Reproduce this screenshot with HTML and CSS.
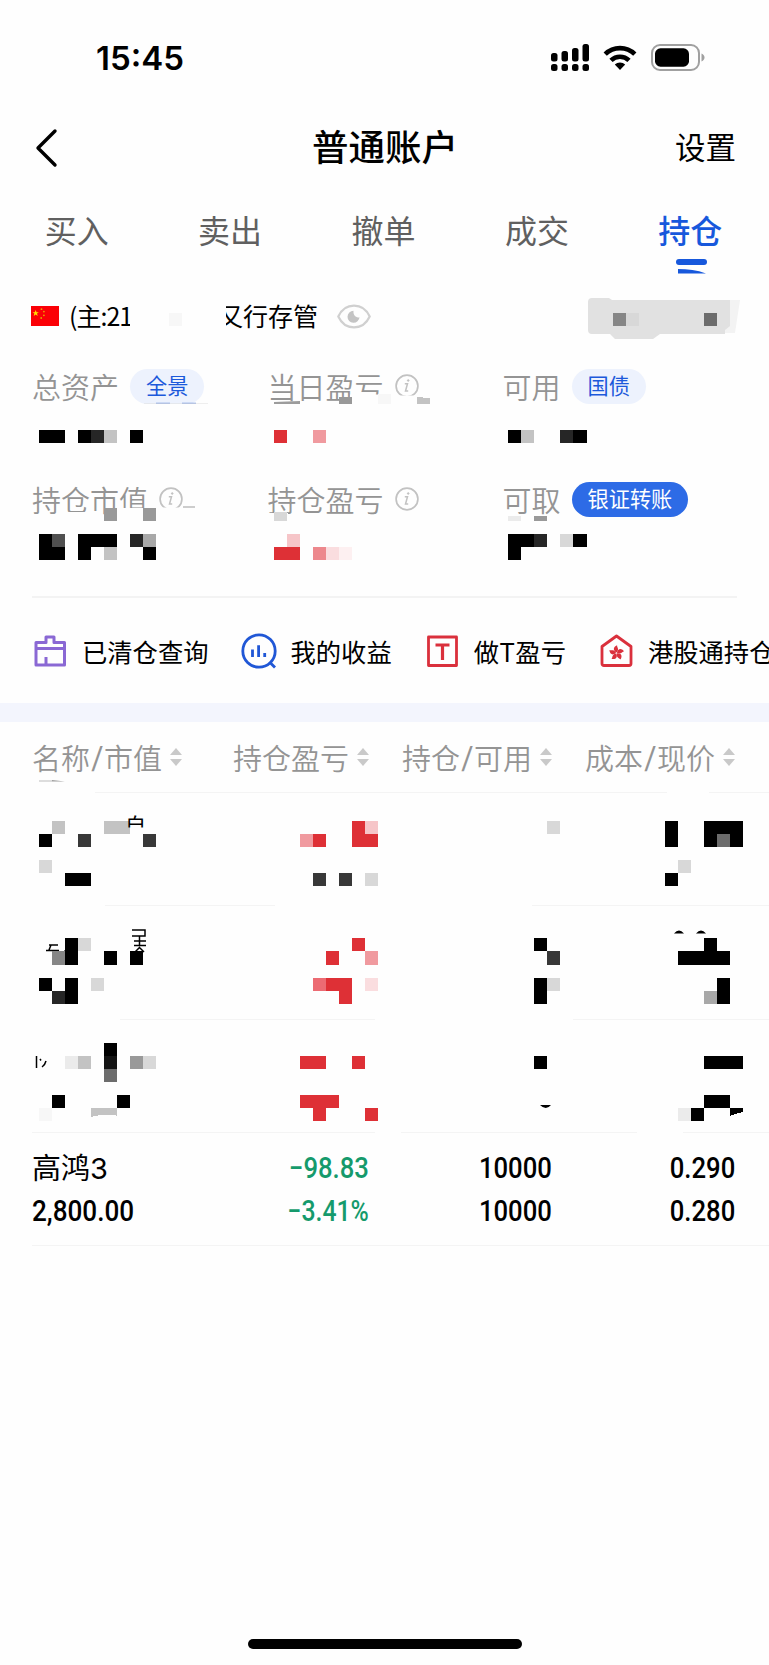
FILE: index.html
```
<!DOCTYPE html>
<html lang="zh-CN">
<head>
  <meta charset="UTF-8">
  <meta name="viewport" content="width=device-width, initial-scale=1.0">
  <title>普通账户</title>
  <link rel="stylesheet" href="styles.css">
</head>
<body>
  <div class="app">
    <!-- Status bar -->
    <div class="status-bar">
      <span class="time">15:45</span>
      <div class="status-icons">
        <svg class="signal" width="38" height="27" viewBox="0 0 38 27">
          <rect x="0" y="9" width="6.5" height="8.5" rx="2.5"/>
          <rect x="10.5" y="7" width="6.5" height="10.5" rx="2.5"/>
          <rect x="21" y="4" width="6.5" height="13.5" rx="2.5"/>
          <rect x="31.5" y="0" width="6.5" height="17.5" rx="2.5"/>
          <rect x="0" y="20" width="6.5" height="7" rx="2.5"/>
          <rect x="10.5" y="20" width="6.5" height="7" rx="2.5"/>
          <rect x="21" y="20" width="6.5" height="7" rx="2.5"/>
          <rect x="31.5" y="20" width="6.5" height="7" rx="2.5"/>
        </svg>
        <svg class="wifi" width="34" height="25" viewBox="0 0 34 25">
          <path d="M2.2 9.2a21 21 0 0 1 29.6 0M8 15.4a12.8 12.8 0 0 1 18 0" fill="none" stroke="#000" stroke-width="4.6"/>
          <path d="M17 25l-5.2-5.4a7.4 7.4 0 0 1 10.4 0z"/>
        </svg>
        <svg class="battery" width="54" height="27" viewBox="0 0 54 27">
          <rect x="1" y="1" width="47" height="25" rx="8" fill="none" stroke="#a0a0a0" stroke-width="2"/>
          <rect x="4" y="4.3" width="34" height="18.4" rx="5.5"/>
          <path d="M50.5 9.5c4 1.5 4 6.5 0 8z" fill="#a0a0a0"/>
        </svg>
      </div>
    </div>

    <!-- Navigation -->
    <div class="navbar">
      <svg class="back" width="24" height="40" viewBox="0 0 24 40"><path d="M21 3L4 20l17 17" fill="none" stroke="#000" stroke-width="3.4" stroke-linecap="round" stroke-linejoin="round"/></svg>
      <h1>普通账户</h1>
      <a class="settings">设置</a>
    </div>

    <div class="tabs">
      <span class="tab">买入</span>
      <span class="tab">卖出</span>
      <span class="tab">撤单</span>
      <span class="tab">成交</span>
      <span class="tab active">持仓
        <svg class="tab-mark" width="32" height="16" viewBox="0 0 32 16"><rect x="0" y="0" width="31" height="6" rx="3"/><path d="M2 10c10 0 19 1 28 4.5H2z"/></svg>
      </span>
    </div>

    <!-- Account -->
    <div class="account">
      <svg class="flag" width="28" height="20" viewBox="0 0 28 20">
        <rect width="28" height="20" fill="#fb0006"/>
        <path d="M4.7 4l.8 2.2h2.3L6 7.6l.7 2.3-2-1.4-2 1.4.7-2.3-1.9-1.4h2.3z" fill="#ffe100"/>
        <circle cx="10.5" cy="3.2" r=".9" fill="#e8a300"/><circle cx="12.9" cy="5.6" r=".9" fill="#e8a300"/><circle cx="12.9" cy="9.3" r=".9" fill="#e8a300"/><circle cx="10.2" cy="12" r=".9" fill="#e8a300"/>
      </svg>
      <span class="account-id">(主:21</span>
      <span class="bank"><span class="bank-cut">又</span>行存管</span>
      <svg class="eye" width="34" height="25" viewBox="0 0 34 25">
        <path d="M1.3 12.5C8-2 26-2 32.7 12.5 26 27 8 27 1.3 12.5z" fill="none" stroke="#d0d0d0" stroke-width="2.2"/>
        <path d="M16.5 6.8a6 6 0 1 0 6 6.4c-3.5 1-6.5-2-6-6.4z" fill="#c4c4c4"/>
      </svg>
    </div>

    <!-- Summary -->
    <div class="summary">
      <div class="item">总资产<span class="pill">全景</span></div>
      <div class="item">当日盈亏<svg class="info" width="24" height="24" viewBox="0 0 24 24"><use href="#info"/></svg></div>
      <div class="item">可用<span class="pill">国债</span></div>
      <div class="item">持仓市值<svg class="info" width="24" height="24" viewBox="0 0 24 24"><use href="#info"/></svg></div>
      <div class="item">持仓盈亏<svg class="info" width="24" height="24" viewBox="0 0 24 24"><use href="#info"/></svg></div>
      <div class="item">可取<span class="pill solid">银证转账</span></div>
    </div>

    <!-- Shortcuts -->
    <div class="shortcuts">
      <div class="shortcut">
        <svg width="36" height="36" viewBox="0 0 36 36" fill="none" stroke="#8a68d4" stroke-width="3" stroke-linejoin="round"><path d="M4 9.5h10V4h8v5.500h10.500v22.500H4zM4 15.500h28M14 32v-8"/></svg>
        <span>已清仓查询</span>
      </div>
      <div class="shortcut">
        <svg width="36" height="36" viewBox="0 0 36 36" fill="none" stroke="#2057d6" stroke-width="2.8"><circle cx="18" cy="18" r="16.2"/><path d="M28.500 29l5.500 5.500"/><path d="M11.500 16.500v7.500M17.600 12.300V24M23.700 20v4" stroke-width="2.8"/></svg>
        <span>我的收益</span>
      </div>
      <div class="shortcut">
        <svg width="36" height="36" viewBox="0 0 36 36" fill="none" stroke="#da303c" stroke-width="2.8" stroke-linejoin="round"><path d="M4.500 4h28v28.500h-28z"/><path d="M11.500 12h14M18.500 12v15" stroke-width="3.2"/></svg>
        <span>做T盈亏</span>
      </div>
      <div class="shortcut">
        <svg width="36" height="36" viewBox="0 0 36 36">
          <path d="M18.500 3L33 13.500v17q0 2-2 2H6q-2 0-2-2v-17z" fill="none" stroke="#da303c" stroke-width="2.8" stroke-linejoin="round"/>
          <g fill="#da303c">
            <path id="petal" d="M18.500 19.500c-3.700-2-3.500-5.500.6-7.200-.4 1.800 2.700 4-.6 7.200z"/>
            <use href="#petal" transform="rotate(72 18.500 20)"/>
            <use href="#petal" transform="rotate(144 18.500 20)"/>
            <use href="#petal" transform="rotate(216 18.500 20)"/>
            <use href="#petal" transform="rotate(288 18.500 20)"/>
          </g>
        </svg>
        <span>港股通持仓</span>
      </div>
    </div>

    <!-- Holdings -->
    <div class="holdings">
      <div class="row head">
        <span>名称<em>/</em>市值<i class="sort"></i></span>
        <span>持仓盈亏<i class="sort"></i></span>
        <span>持仓<em>/</em>可用<i class="sort"></i></span>
        <span>成本<em>/</em>现价<i class="sort"></i></span>
      </div>
      <div class="row"></div>
      <div class="row"></div>
      <div class="row"></div>
      <div class="row">
        <div class="cell"><b class="name">高鸿3</b><b class="num">2,800.00</b></div>
        <div class="cell down"><b class="num">−98.83</b><b class="num percent">−3.41%</b></div>
        <div class="cell"><b class="num">10000</b><b class="num">10000</b></div>
        <div class="cell"><b class="num">0.290</b><b class="num">0.280</b></div>
      </div>
    </div>

    <div class="home-bar"></div>

    <!-- Privacy mosaic over account numbers and positions -->
    <svg class="mosaic" width="769" height="1665" viewBox="0 0 769 1665">
      <defs>
        <g id="info" fill="none" stroke="#c2c2c2"><circle cx="12" cy="12" r="10.9" stroke-width="1.7"/><path d="M9.8 9.8h2.7l-2 7.3h2.7" stroke-width="1.5"/><circle cx="13.2" cy="6.500" r=".8" fill="#c2c2c2"/></g>
        <clipPath id="cut-a"><path d="M124 810h24v17.500h-24z"/></clipPath>
      </defs>
      <!-- wiped areas -->
      <path fill="#fefefe" d="M350 394.500h37v10h-37zM392 395.500h30v9h-30zM104 508h50v14h-50zM156 507.500h32v8h-32zM68 512h20v6H68zM268 513h20v8h-20zM130 290h9v40h-9z
        M30 791h65v4H30zM667 791h42v4h-42zM30 903h75v5H30zM275 903h257v5H275zM30 1017h90v5H30zM375 1017h198v5H375zM375 1130h26v5h-26zM637 1130h46v5h-46z"/>
      <!-- account button -->
      <path fill="#f3f3f3" d="M724 300h16l-5 33h-11z"/>
      <path fill="#e1e1e1" d="M592 298h17l3 2h118v26l-5 4v4h-65l-7 5h-38l-5-5h-18q-4 0-4-4v-28q0-4 4-4z"/>
      <!-- leftovers -->
      <path fill="#9c9c9c" d="M274 402l26-1v3h-26zM183 506.500h12v1h-12zM52 780l13 1.500H52z"/>
      <path fill="#6f92de" d="M156 402.700h14v1h-14zM182 402.700h14v1h-14z"/>
      <path fill="#ddd" d="M39 780h13v2H39zM144 403h64v.5h-64z"/>
      <path fill="none" stroke="#000" stroke-width="1.5" d="M132 930h13v6h-13M139.500 936v10M134 941h12M134 945.500h12M140 947l-5 5M139 947l5 5M49 945h9M51 945l-2 5M46 950.500h13M64 952l2-2 4 2M36.500 1056v12M40 1059l1 1.500M46 1061q-1 4-4 6"/>
      <path d="M674 933.500q5-6 10 0zM696 933.500q5-6 10 0zM540 1105q6 6 11 0z"/>
      <g transform="scale(13.034)" shape-rendering="crispEdges">
        <path d="M3 33h2v1H3zM6 33h1v1H6zM10 33h1v1h-1zM39 33h1v1h-1zM44 33h1v1h-1z
          M3 41h1v1h1v1H3zM6 41h3v1H7v1H6zM11 42h1v1h-1zM39 41h2v1h-1v1h-1zM44 41h1v1h-1z
          M3 64h1v1H3zM5 67h2v1H5zM51 63h1v2h-1zM54 63h3v2h-1v-1h-1v1h-1zM51 67h1v1h-1z
          M5 72h1v2H5zM8 73h1v1H8zM10 73h1v1h-1zM3 75h1v1H3zM5 75h1v2H5zM41 72h1v1h-1zM54 72h1v1h1v1h-4v-1h2zM41 75h1v2h-1zM55 75h1v2h-1z
          M8 80h1v1H8zM4 84h1v1H4zM9 84h1v1H9zM41 81h1v1h-1zM54 81h3v1h-3zM54 84h2v1h-2zM53 85h1v1h-1zM56 85h1v.3l-1 .3z"/>
        <path fill="#262626" d="M7 33h1v1H7zM43 33h1v1h-1zM10 41h1v1h-1zM41 41h1v1h-1zM4 76h1v1H4z"/>
        <path fill="#141414" d="M8 81h1v1H8z"/>
        <path fill="#383838" d="M6 64h1v1H6zM11 64h1v1h-1zM24 67h1v1h-1zM26 67h1v1h-1zM42 73h1v1h-1z"/>
        <path fill="#505050" d="M4 41h1v1H4z"/>
        <path fill="#6c6c6c" d="M54 24h1v1h-1zM55 64h1v1h-1zM8 82h1v1H8z"/>
        <path fill="#868686" d="M47 24h1v1h-1zM4 73h1v1H4z"/>
        <path fill="#999" d="M26 30.450h1V31h-1zM8 39h1v1H8zM11 39h1v1h-1zM41 39.600h1v.4h-1zM10 81h1v1h-1z"/>
        <path fill="#a8a8a8" d="M11 41h1v1h-1zM54 76h1v1h-1z"/>
        <path fill="#c3c3c3" d="M8 33h1v1H8zM40 33h1v1h-1zM32 30.450l1 .1V31h-1zM8 42h1v1H8zM4 63h1v1H4zM8 63h2v1H8zM6 81h1v1H6zM7 85h2v.6q-1-.2-2 .1z"/>
        <path fill="#d8d8d8" d="M48 24h1v1h-1zM21 39.300h1v.7h-1zM43 41h1v1h-1zM3 66h1v1H3zM28 67h1v1h-1zM6 72h1v1H6zM7 75h1v1H7zM42 63h1v1h-1zM52 66h1v1h-1zM42 75h1v1h-1zM11 81h1v1h-1z"/>
        <path fill="#ebebeb" d="M39 39.600h1v.4h-1zM5 81h1v1H5zM52 85h1v1h-1z"/>
        <path fill="#f7f7f7" d="M13 24h1v1h-1zM29 30.200h1v.8h-1zM3 85h1v1H3z"/>
        <path fill="#de3036" d="M21 33h1v1h-1zM21 42h2v1h-2zM24 64h1v1h-1zM27 63h1v1h1v1h-2zM27 72h1v1h-1zM25 73h1v1h-1zM25 75h2v2h-1v-1h-1zM23 81h2v1h-2zM27 81h1v1h-1zM23 84h3v1h-1v1h-1v-1h-1zM28 85h1v1h-1z"/>
        <path fill="#ec6b73" d="M24 75h1v1h-1z"/>
        <path fill="#f09a9f" d="M24 33h1v1h-1zM23 64h1v1h-1zM28 73h1v1h-1z"/>
        <path fill="#ed888d" d="M24 42h1v1h-1z"/>
        <path fill="#f6c5c8" d="M22 41h1v1h-1zM28 63h1v1h-1z"/>
        <path fill="#fadddf" d="M25 42h1v1h-1zM28 75h1v1h-1z"/>
        <path fill="#fdf0f1" d="M26 42h1v1h-1z"/>
      </g>
      <g clip-path="url(#cut-a)"><text x="125" y="833" font-size="21">自</text></g>
    </svg>
  </div>
</body>
</html>
```
FILE: styles.css
```
* { box-sizing: border-box; }
body {
  margin: 0;
  background: #fff; color: #000;
  font-family: Inter, "Noto Sans CJK SC", sans-serif;
}
svg { display: block; flex: none; }
.app {
  position: relative;
  width: 769px; height: 1665px; overflow: hidden;
  background: #fefefe;
  display: flex; flex-direction: column;
}

/* Status bar */
.status-bar {
  height: 114px; flex: none;
  display: flex; align-items: center; justify-content: space-between;
  padding: 0 64px 0 96px;
}
.time { font-size: 33px; font-weight: 600; line-height: 40px; padding-top: 1px; }
.status-icons { display: flex; align-items: center; gap: 14px; }

/* Navigation */
.navbar {
  height: 68px; flex: none;
  display: grid; grid-template-columns: 1fr auto 1fr; align-items: center;
  padding: 0 33px 0 34px;
}
h1 { margin: 0; font-size: 36.5px; font-weight: 500; line-height: 64px; }
.settings { justify-self: end; font-size: 30.5px; line-height: 44px; }

.tabs { height: 96px; flex: none; display: flex; margin-right: 2px; }
.tab {
  position: relative; flex: 1; text-align: center;
  font-size: 32px; line-height: 100px; color: #606060;
}
.tab.active { color: #1758dc; font-weight: 500; }
.tab-mark { position: absolute; left: 62px; top: 77px; fill: #1758dc; }

/* Account */
.account {
  height: 76px; flex: none;
  display: flex; align-items: center;
  padding-left: 31px; font-size: 25px;
}
.account-id { margin: -3px 0 0 10px; width: 62px; white-space: nowrap; font-family: "Noto Sans CJK SC", sans-serif; letter-spacing: -1px; }
.bank { margin: -3px 0 0 87px; white-space: nowrap; }
.bank-cut { clip-path: inset(0 0 0 8px); display: inline-block; }
.eye { margin-left: 19px; }

/* Summary */
.summary {
  height: 244px; flex: none;
  display: grid; grid-template-columns: 235.5px 235px 1fr; grid-template-rows: 113px 113px;
  margin: 0 32px; border-bottom: 2px solid #f3f3f3;
}
.item {
  display: flex; align-items: center; height: 64px;
  font-size: 29px; font-weight: 350; color: #949494; white-space: nowrap;
}
.pill {
  height: 35px; border-radius: 18px; padding: 0 16px; margin-left: 11px;
  background: #edf2fd; color: #1c59db;
  font-size: 21.2px; font-weight: 400; line-height: 34px;
}
.pill.solid { background: #2d6be6; color: #fff; }
.info { margin-left: 11px; }

/* Shortcuts */
.shortcuts {
  height: 124px; flex: none; overflow: hidden;
  display: flex; align-items: center; gap: 32px;
  padding: 1px 0 0 32px; border-bottom: 19px solid #f3f5fd;
}
.shortcut {
  display: flex; align-items: center; gap: 14px; flex: none;
  font-size: 25.3px; white-space: nowrap;
}

/* Holdings */
.row {
  height: 113.3px; margin-left: 32px; padding-right: 34px;
  display: grid; grid-template-columns: 154px 183px 183px 183px; align-items: center;
  border-bottom: 1.5px solid #f4f4f4;
}
.row.head {
  height: 71px;
  justify-items: end;
  font-size: 29px; font-weight: 350; color: #949494;
}
.row.head span { display: flex; align-items: center; white-space: nowrap; }
.row.head span:first-child { justify-self: start; }
.row.head em { font-style: normal; width: 14px; text-align: center; transform: scaleX(1.3); }
.sort { display: flex; flex-direction: column; gap: 4px; margin-left: 8px; }
.sort::before, .sort::after { content: ""; border: 6px solid transparent; }
.sort::before { border-top: 0; border-bottom: 7px solid #c9c9c9; }
.sort::after { border-bottom: 0; border-top: 7px solid #c9c9c9; }
.cell { display: flex; flex-direction: column; align-items: flex-end; padding-top: 2px; }
.cell:first-child { align-items: flex-start; }
.cell b { font-weight: 400; height: 43px; line-height: 43px; white-space: nowrap; }
.name { font-size: 29px; }
.cell .num {
  font-family: Roboto, sans-serif; font-size: 29.5px; font-weight: 500;
  transform: scaleX(.87); transform-origin: right;
}
.cell:first-child .num { transform: scaleX(.885); transform-origin: left; }
.cell .percent { transform: scaleX(.84); }
.down { color: #159a6c; }

.home-bar {
  width: 274px; height: 10px; border-radius: 5px; background: #000;
  margin: auto auto 16px;
}
.mosaic { position: absolute; left: 0; top: 0; pointer-events: none; }
```
